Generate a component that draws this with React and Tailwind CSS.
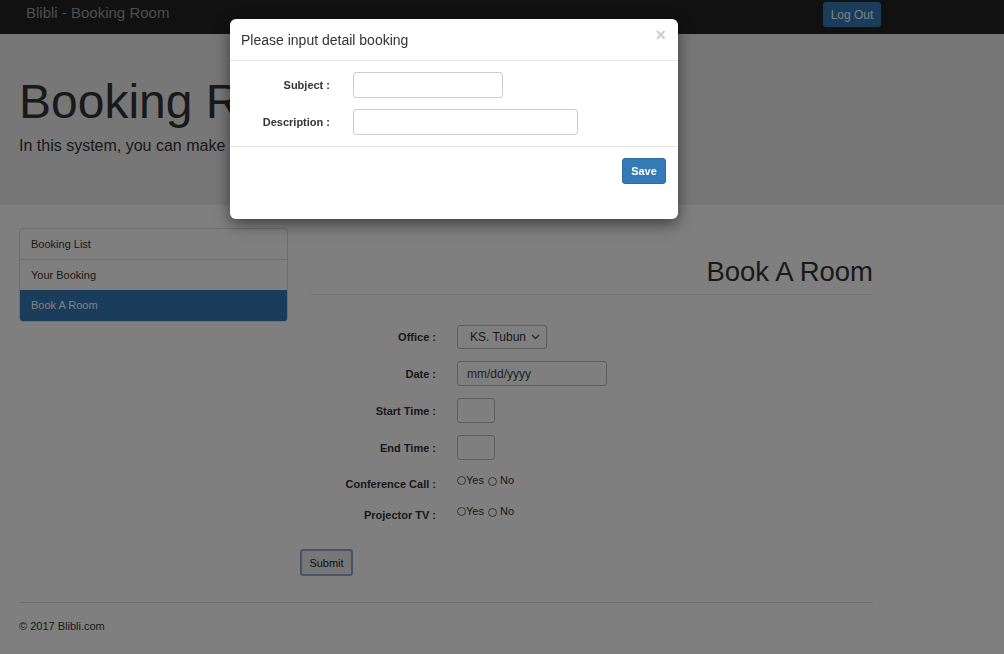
import { useState } from "react";

function Radio() {
  return <span className="inline-block w-[9px] h-[9px] rounded-full border border-[#666] bg-white align-middle" />;
}

function RadioGroup() {
  return (
    <div className="flex items-center text-[11px] leading-[16px] text-[#333]">
      <Radio />
      <span>Yes</span>
      <span className="ml-[4px]">
        <Radio />
      </span>
      <span className="ml-[3px]">No</span>
    </div>
  );
}

function FormRow({ label, children, className = "" }) {
  return (
    <div className={`flex items-center ${className}`}>
      <div className="w-[126px] text-right text-[11px] font-bold text-[#333]">{label}</div>
      <div className="ml-[21px]">{children}</div>
    </div>
  );
}

export default function App() {
  const [office] = useState("KS. Tubun");

  return (
    <div className="relative min-h-screen bg-white font-['Liberation_Sans',Arial,sans-serif] text-[#333]">
      {/* navbar */}
      <div className="h-[34px] bg-[#222] flex items-start justify-between pl-[26px] pr-[123px]">
        <div className="text-[15px] leading-[26px] text-[#9d9d9d]">Blibli - Booking Room</div>
        <button className="mt-[2px] h-[25px] w-[58px] rounded-[3px] bg-[#337ab7] text-white text-[12px]">
          Log Out
        </button>
      </div>

      {/* jumbotron */}
      <div className="h-[171px] bg-[#eee] pl-[19px] pt-[42px]">
        <h1 className="text-[48px] leading-[1.1]">Booking Room</h1>
        <p className="mt-[6px] text-[16px] leading-[1.4]">In this system, you can make a booking room easily.</p>
      </div>

      {/* content */}
      <div className="pl-[19px]">
        <div className="flex">
          <div className="w-[269px] mt-[23px] self-start rounded-[4px] border border-[#ddd] overflow-hidden text-[11px]">
            <div className="h-[31px] flex items-center px-[11px] border-b border-[#ddd]">Booking List</div>
            <div className="h-[30px] flex items-center px-[11px]">Your Booking</div>
            <div className="h-[31px] flex items-center px-[11px] bg-[#337ab7] text-white">Book A Room</div>
          </div>

          <div className="ml-[22px] w-[563px] pt-[52px]">
            <h2 className="text-right text-[27.5px] leading-[1.1]">Book A Room</h2>
            <div className="mt-[7px] border-t border-[#eee]" />

            <FormRow label="Office :" className="mt-[30px] h-[24px]">
              <div className="h-[24px] w-[90px] rounded-[3px] border border-[#bbb] flex items-center justify-between pl-[12px] pr-[6px] text-[12px]">
                <span>{office}</span>
                <svg width="9" height="6" viewBox="0 0 9 6" fill="none" stroke="#555" strokeWidth="1.4">
                  <path d="M1 1l3.5 3.5L8 1" />
                </svg>
              </div>
            </FormRow>

            <FormRow label="Date :" className="mt-[12px] h-[25px]">
              <div className="h-[25px] w-[150px] rounded-[3px] border border-[#bbb] flex items-center pl-[9px] text-[12px] text-[#444]">
                mm/dd/yyyy
              </div>
            </FormRow>

            <FormRow label="Start Time :" className="mt-[12px] h-[25px]">
              <div className="h-[25px] w-[38px] rounded-[3px] border border-[#bbb]" />
            </FormRow>

            <FormRow label="End Time :" className="mt-[12px] h-[25px]">
              <div className="h-[25px] w-[38px] rounded-[3px] border border-[#bbb]" />
            </FormRow>

            <div className="mt-[12px] h-[31px] flex items-start">
              <div className="w-[126px] mt-[4px] text-right text-[11px] leading-[16px] font-bold">Conference Call :</div>
              <div className="ml-[21px]">
                <RadioGroup />
              </div>
            </div>

            <div className="h-[31px] flex items-start">
              <div className="w-[126px] mt-[4px] text-right text-[11px] leading-[16px] font-bold">Projector TV :</div>
              <div className="ml-[21px]">
                <RadioGroup />
              </div>
            </div>

            <button className="mt-[15px] ml-[-10px] h-[27px] w-[53px] rounded-[3px] border-2 border-[#8ea6d8] bg-[#efefef] text-[11px] text-[#222]">
              Submit
            </button>
          </div>
        </div>

        <div className="mt-[26px] w-[854px] border-t border-[#e5e5e5]" />
        <div className="mt-[15px] pb-[29px] text-[11px] leading-[16px]">© 2017 Blibli.com</div>
      </div>

      {/* backdrop */}
      <div className="fixed inset-0 bg-black/50" />

      {/* modal */}
      <div className="absolute left-[230px] top-[19px] w-[448px] rounded-[6px] bg-white shadow-[0_5px_15px_rgba(0,0,0,0.5)]">
        <div className="relative border-b border-[#e5e5e5] px-[11px] pt-[11px] pb-[10px]">
          <h4 className="text-[14px] leading-[20px] text-[#333]">Please input detail booking</h4>
          <span className="absolute right-[12px] top-[7px] text-[18px] leading-[18px] font-bold text-black/20">×</span>
        </div>
        <div className="pt-[11px] pb-[11px]">
          <div className="flex items-center h-[26px]">
            <div className="w-[100px] text-right text-[11px] font-bold">Subject :</div>
            <div className="ml-[23px] h-[26px] w-[150px] rounded-[3px] border border-[#ccc]" />
          </div>
          <div className="mt-[11px] flex items-center h-[26px]">
            <div className="w-[100px] text-right text-[11px] font-bold">Description :</div>
            <div className="ml-[23px] h-[26px] w-[225px] rounded-[3px] border border-[#ccc]" />
          </div>
        </div>
        <div className="border-t border-[#e5e5e5] pt-[11px] pb-[35px] pr-[12px] flex justify-end">
          <button className="h-[26px] w-[44px] rounded-[3px] border border-[#2e6da4] bg-[#337ab7] text-white text-[11px] font-bold">
            Save
          </button>
        </div>
      </div>
    </div>
  );
}
